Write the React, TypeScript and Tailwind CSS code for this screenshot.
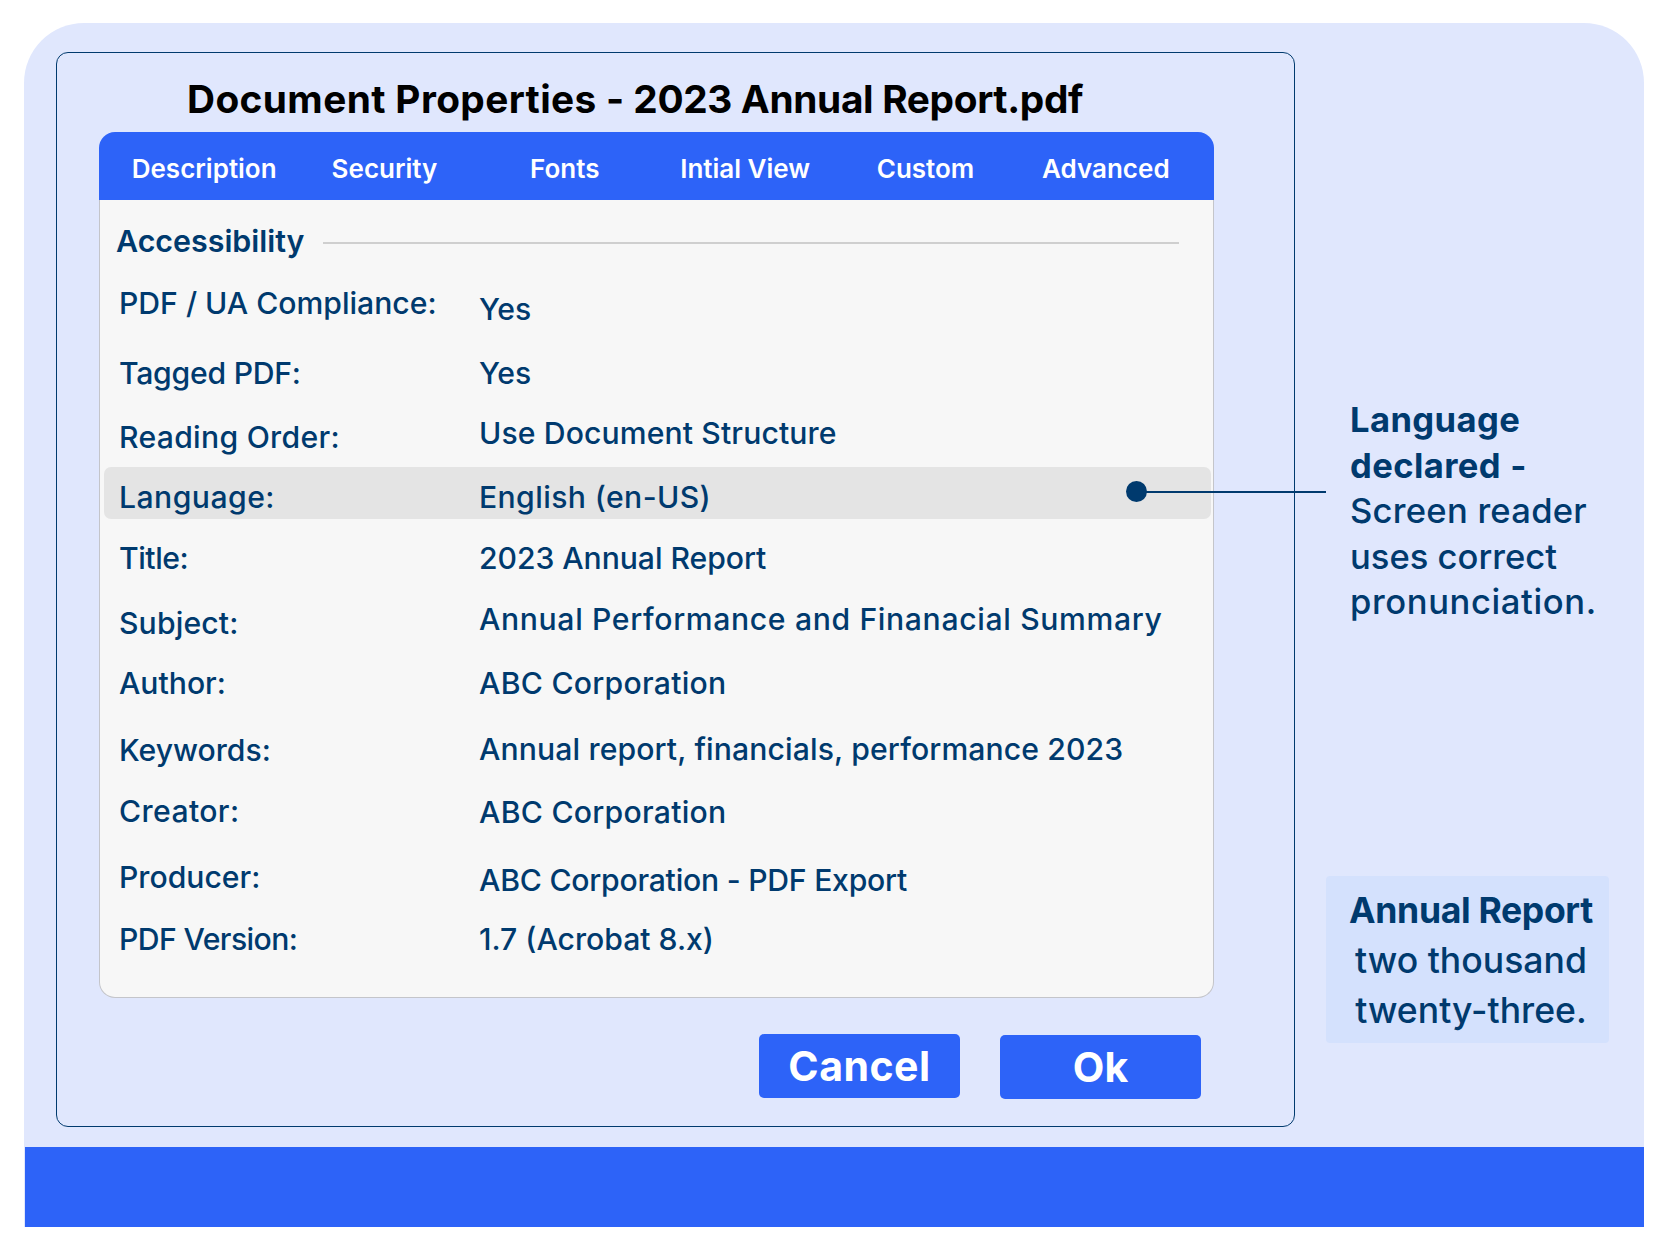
import React from "react";

const rows = [
  { label: "PDF / UA Compliance:", value: "Yes", h: "h-[70px]", lp: "pt-[7px]", vp: "pt-[13px]" },
  { label: "Tagged PDF:", value: "Yes", h: "h-[60px]", lp: "pt-[7px] tracking-[-0.24px]", vp: "pt-[7px]" },
  { label: "Reading Order:", value: "Use Document Structure", h: "h-[57px]", lp: "pt-[11px] tracking-[0.3px]", vp: "pt-[7px] tracking-[0.13px]" },
  { label: "Language:", value: "English (en-US)", h: "h-[52px]", lp: "pt-[14px] tracking-[0.47px]", vp: "pt-[14px] tracking-[0.4px]", hi: true },
  { label: "Title:", value: "2023 Annual Report", h: "h-[75px]", lp: "pt-[23px] tracking-[-0.45px]", vp: "pt-[23px] tracking-[-0.05px]" },
  { label: "Subject:", value: "Annual Performance and Finanacial Summary", h: "h-[64px]", lp: "pt-[13px] tracking-[0.15px]", vp: "pt-[9px] tracking-[0.65px]" },
  { label: "Author:", value: "ABC Corporation", h: "h-[66px]", lp: "pt-[9px]", vp: "pt-[9px] tracking-[0.28px]" },
  { label: "Keywords:", value: "Annual report, financials, performance 2023", h: "h-[62px]", lp: "pt-[10px]", vp: "pt-[9px] tracking-[0.13px]" },
  { label: "Creator:", value: "ABC Corporation", h: "h-[64px]", lp: "pt-[9px] tracking-[0.4px]", vp: "pt-[10px] tracking-[0.28px]" },
  { label: "Producer:", value: "ABC Corporation - PDF Export", h: "h-[64px]", lp: "pt-[11px]", vp: "pt-[14px] tracking-[-0.23px]" },
  { label: "PDF Version:", value: "1.7 (Acrobat 8.x)", h: "h-[60px]", lp: "pt-[9px] tracking-[-0.58px]", vp: "pt-[9px]" },
];

const tabs = ["Description", "Security", "Fonts", "Intial View", "Custom", "Advanced"];

export default function App() {
  return (
    <div className="w-[1668px] h-[1250px] bg-white pt-[23px] pl-[24px] font-['Inter',sans-serif] text-[#003a6e] overflow-hidden">
      <div className="w-[1620px] h-[1204px] rounded-t-[60px] bg-[#e0e7fd] flex flex-col">
        <div className="h-[1124px] flex pt-[29px] pl-[32px]">
          <div className="w-[1239px] h-[1075px] border border-[#003a6e] rounded-[12px] pl-[42px] shrink-0">
            <h1 className="h-[79px] pl-[88px] pt-[21px] text-[38.8px] leading-[50px] font-bold text-black whitespace-nowrap">
              <span className="tracking-[0.39px]">Document Properties</span> -{" "}
              <span className="tracking-[-0.34px]">2023 Annual Report.pdf</span>
            </h1>
            <div className="w-[1115px]">
              <div className="h-[68px] bg-[#2d63f8] rounded-t-[16px] grid grid-cols-6 pl-[15px] pr-[18px] pt-[21px] items-start">
                {tabs.map((t) => (
                  <div key={t} className="text-center text-white text-[26px] font-semibold leading-[32px] whitespace-nowrap">
                    {t}
                  </div>
                ))}
              </div>
              <div className="h-[798px] bg-[#f7f7f7] border-x border-b border-[#c4c5ca] rounded-b-[16px]">
                <div className="h-[80px] pt-[23px] pl-[16px] flex items-start">
                  <span className="text-[30.4px] leading-[36px] font-semibold whitespace-nowrap">Accessibility</span>
                  <div className="ml-[19px] mt-[19px] w-[856px] h-[2px] bg-[#cfcfcf]" />
                </div>
                {rows.map((r) => (
                  <div
                    key={r.label}
                    className={`${r.h} ${r.hi ? "bg-[#e4e4e4] relative" : ""} ml-[4px] w-[1107px] pl-[15px] flex rounded-[7px] text-[30.15px] font-medium leading-[32px]`}
                  >
                    <div className={`w-[360px] shrink-0 whitespace-nowrap ${r.lp}`}>{r.label}</div>
                    <div className={`whitespace-nowrap ${r.vp}`}>{r.value}</div>
                    {r.hi && (
                      <>
                        <div className="absolute left-[1022px] top-[14px] w-[21px] h-[21px] rounded-full bg-[#003a6e]" />
                        <div className="absolute left-[1032px] top-[24px] w-[190px] h-[2px] bg-[#003a6e]" />
                      </>
                    )}
                  </div>
                ))}
              </div>
            </div>
            <div className="mt-[36px] ml-[660px] flex items-start gap-[40px]">
              <div className="w-[201px] h-[64px] pt-[1px] rounded-[5px] bg-[#2d63f8] text-white text-[41px] tracking-[0.5px] font-bold flex items-center justify-center">
                Cancel
              </div>
              <div className="mt-[1px] w-[201px] h-[64px] pt-[1px] rounded-[5px] bg-[#2d63f8] text-white text-[41px] font-bold flex items-center justify-center">
                Ok
              </div>
            </div>
          </div>
          <div className="flex flex-col pl-[31px]">
            <p className="mt-[345px] ml-[24px] w-[270px] text-[34.6px] font-medium leading-[45.6px] whitespace-nowrap">
              <span className="font-bold tracking-[0.4px]">
                Language
                <br />
                declared
              </span>{" "}
              <span className="font-bold">-</span>
              <br />
              <span className="tracking-[0.25px]">Screen reader</span>
              <br />
              uses correct
              <br />
              <span className="tracking-[0.6px]">pronunciation.</span>
            </p>
            <div className="mt-[251px] w-[283px] h-[167px] rounded-[4px] bg-[#d4e1fd] pt-[10px] pl-[7px] text-center text-[35.6px] font-medium leading-[50px]">
              <div className="font-bold tracking-[-0.35px] whitespace-nowrap">Annual Report</div>
              <div>two thousand</div>
              <div>twenty-three.</div>
            </div>
          </div>
        </div>
        <div className="h-[80px] ml-[1px] bg-[#2d63f8]" />
      </div>
    </div>
  );
}
